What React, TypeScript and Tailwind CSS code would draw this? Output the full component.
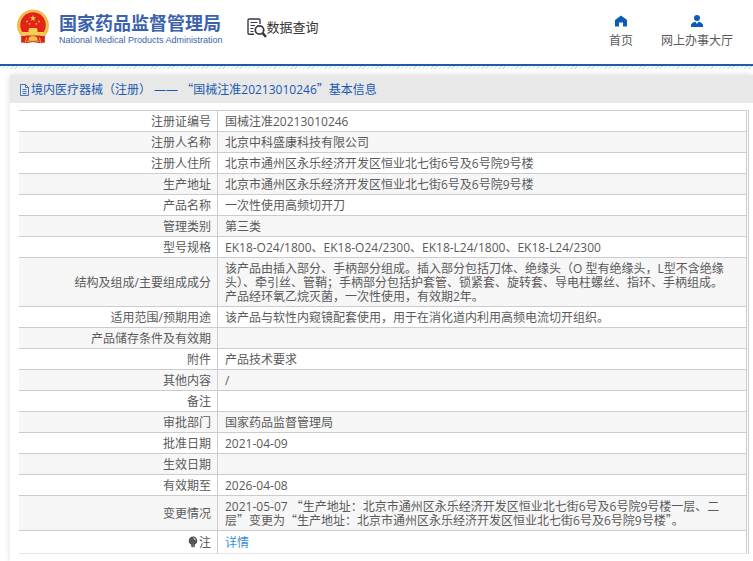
import React from 'react';

interface Row { label: string; value: string; }

const ROWS: Row[] = [
  { label: '注册证编号', value: '国械注准20213010246' },
  { label: '注册人名称', value: '北京中科盛康科技有限公司' },
  { label: '注册人住所', value: '北京市通州区永乐经济开发区恒业北七街6号及6号院9号楼' },
  { label: '生产地址', value: '北京市通州区永乐经济开发区恒业北七街6号及6号院9号楼' },
  { label: '产品名称', value: '一次性使用高频切开刀' },
  { label: '管理类别', value: '第三类' },
  { label: '型号规格', value: 'EK18-O24/1800、EK18-O24/2300、EK18-L24/1800、EK18-L24/2300' },
  {
    label: '结构及组成/主要组成成分',
    value: '该产品由插入部分、手柄部分组成。插入部分包括刀体、绝缘头（O 型有绝缘头，L型不含绝缘头）、牵引丝、管鞘；手柄部分包括护套管、锁紧套、旋转套、导电柱螺丝、指环、手柄组成。产品经环氧乙烷灭菌，一次性使用，有效期2年。',
  },
  { label: '适用范围/预期用途', value: '该产品与软性内窥镜配套使用，用于在消化道内利用高频电流切开组织。' },
  { label: '产品储存条件及有效期', value: '' },
  { label: '附件', value: '产品技术要求' },
  { label: '其他内容', value: '/' },
  { label: '备注', value: '' },
  { label: '审批部门', value: '国家药品监督管理局' },
  { label: '批准日期', value: '2021-04-09' },
  { label: '生效日期', value: '' },
  { label: '有效期至', value: '2026-04-08' },
  {
    label: '变更情况',
    value: '2021-05-07 “生产地址：北京市通州区永乐经济开发区恒业北七街6号及6号院9号楼一层、二层”变更为“生产地址：北京市通州区永乐经济开发区恒业北七街6号及6号院9号楼”。',
  },
];

// The Latin font would set curly quotes narrow, so they take the CJK face.
function Text({ children }: { children: string }) {
  return (
    <>
      {children.split(/([“”])/).map((part, i) =>
        /^[“”]$/.test(part)
          ? <span key={i} className="font-['Noto_Sans_CJK_SC',sans-serif] leading-none">{part}</span>
          : part
      )}
    </>
  );
}

function Emblem() {
  return (
    <svg viewBox="0 0 34 36" className="h-9 w-[34px] shrink-0" aria-hidden="true">
      <path d="M6 25 L5 33.500 L11 34 L17 33 L23 34 L29 33.500 L28 25Z" fill="#d9231b" />
      <circle cx="17" cy="16.500" r="15.800" fill="#f5c452" />
      <circle cx="17" cy="16.500" r="15.300" fill="none" stroke="#e9a93c" strokeWidth="1" strokeDasharray="2 1" />
      <circle cx="17" cy="16" r="12.800" fill="#e2231a" />
      <path d="M17 6l.8 2.200 2.300.1-1.800 1.400.6 2.300-1.900-1.300-1.900 1.300.6-2.300-1.800-1.400 2.300-.1z" fill="#f9d34f" />
      <g fill="#f6b63b">
        <circle cx="11" cy="12.500" r=".9" />
        <circle cx="23" cy="12.500" r=".9" />
        <circle cx="13.700" cy="14.800" r=".9" />
        <circle cx="20.300" cy="14.800" r=".9" />
        <path d="M12.500 20.500l1-1.500h7l1 1.500v2.500h6v3.500H6.500V23h6z" fill="#f8ce55" />
      </g>
      <path d="M5 27h7l2 1.500h6l2-1.500h7l-1 6-6 .5-5-1.500-5 1.500-6-.5z" fill="#d9231b" />
      <path d="M12.500 29.500a4.600 3.200 0 0 1 9 0v2h-9z" fill="#f5c452" />
      <path d="M10.500 28.500l-1 5M23.500 28.500l1 5M11 32.500l6-1.200 6 1.200" fill="none" stroke="#f3bd45" strokeWidth="1" />
    </svg>
  );
}

function SearchDocIcon() {
  return (
    <svg viewBox="0 0 20 20" className="size-5 shrink-0" fill="none" stroke="#393946" aria-hidden="true">
      <path d="M7 16.300H2.200A1.200 1.200 0 0 1 1 15.100V2.200A1.200 1.200 0 0 1 2.200 1h9.600A1.200 1.200 0 0 1 13 2.200V6" strokeWidth="1.400" />
      <path d="M3.500 4.500h7M3.500 7.500h4.500M3.500 10.500h3M3.500 13.500h3" strokeWidth="1.200" />
      <circle cx="12.500" cy="12" r="4.200" strokeWidth="1.800" />
      <path d="M15.600 15.200l3.400 3.600" strokeWidth="2.600" />
    </svg>
  );
}

function PageIcon() {
  return (
    <svg viewBox="0 0 11 12" className="h-3 w-[11px] shrink-0" fill="none" stroke="#1a59b0" strokeWidth=".8" aria-hidden="true">
      <path d="M1.500.5h5l3 3v8h-8zM6.500.5v3h3M3.500 5.500h4M3.500 7.500h4M3.500 9.500h4" />
    </svg>
  );
}

function Bulb() {
  return (
    <svg viewBox="0 0 10 12" className="mr-px inline-block h-3 w-2.5 align-[-1px]" aria-hidden="true">
      <circle cx="5" cy="4.800" r="4.300" fill="#555" />
      <path d="M3 8h4v2.500L5 11.500 3 10.500z" fill="#666" />
      <path d="M5.500 2.200q1.700.3 1.900 2" stroke="#fff" strokeWidth=".9" fill="none" />
    </svg>
  );
}

const LABEL = 'border-t border-r border-[#ccc] pt-1 pb-0.5 pr-1.5 text-right font-normal';
const VALUE = 'border-t border-r border-[#ccc] pt-1 pb-0.5 pl-[7px] pr-4 text-left';

export default function App() {
  return (
    <div lang="zh-CN" className="bg-white font-['Open_Sans','Noto_Sans_CJK_SC',sans-serif] text-xs leading-[14px] text-[#5a5a5a]">
      <header className="flex h-[66px] items-start justify-between border-b-2 border-[#1b5da6] pl-4 pr-5">
        <div className="flex items-start">
          <a href="#" className="flex items-start gap-[9px] pt-[9px] text-[#3b62ad]">
            <Emblem />
            <div className="pt-1 whitespace-nowrap">
              <div className="text-lg font-bold leading-[20px]">国家药品监督管理局</div>
              <div className="font-['Liberation_Sans',sans-serif] text-[9px] leading-[14px]">National Medical Products Administration</div>
            </div>
          </a>
          <h1 className="ml-6 flex items-center pt-[18px] text-[13px] leading-[18px] text-[#333]">
            <SearchDocIcon />
            <span className="pb-0.5">数据查询</span>
          </h1>
        </div>
        <nav className="flex gap-7 pt-[15px]">
          <a href="#" className="flex flex-col items-center gap-[5px]">
            <svg viewBox="0 0 12 12" className="size-3" fill="#0b5bbb" aria-hidden="true">
              <path d="M6 .5L0 5v6.500h4V7.500h4v4h4V5z" />
            </svg>
            <span className="leading-[18px]">首页</span>
          </a>
          <a href="#" className="flex flex-col items-center gap-[5px]">
            <svg viewBox="0 0 12 12" className="size-3" fill="#0b5bbb" aria-hidden="true">
              <circle cx="6" cy="3" r="3" />
              <path d="M0 12V9.500Q1.500 7 4.500 6.800L6 9l1.500-2.200Q10.500 7 12 9.500V12z" />
            </svg>
            <span className="leading-[18px]">网上办事大厅</span>
          </a>
        </nav>
      </header>
      <div className="h-[3px] bg-[repeating-linear-gradient(135deg,#c9e5f4_0px,#c9e5f4_1px,#fff_1px,#fff_3px)]" />

      <main className="ml-2.5 mt-1.5 shadow-[0_0_6px_rgba(0,0,0,0.15)]">
        <h2 className="flex h-7 items-center bg-[#e8e8e8] pl-[9px] pt-0.5 text-[#1a59b0]">
          <PageIcon />
          <span className="ml-px"><Text>境内医疗器械（注册） —— “国械注准20213010246”基本信息</Text></span>
        </h2>
        <div className="bg-white pb-2 pl-[9px] pr-1 pt-[7px]">
          <div className="border-r border-[#ccc] pr-px">
            <table className="w-full table-fixed border-separate border-spacing-0">
              <colgroup>
                <col className="w-[199px]" />
                <col />
              </colgroup>
              <tbody>
                {ROWS.map((row) => (
                  <tr key={row.label} className="h-[21px] even:bg-[#f7f7f7]">
                    <th scope="row" className={LABEL}>{row.label}</th>
                    <td className={VALUE}><Text>{row.value}</Text></td>
                  </tr>
                ))}
                <tr className="h-6">
                  <th scope="row" className={`${LABEL} border-b border-b-[#e5e5e5]`}><Bulb />注</th>
                  <td className={`${VALUE} border-b border-b-[#e5e5e5]`}>
                    <a href="#" className="text-[#3c8fdc]">详情</a>
                  </td>
                </tr>
              </tbody>
            </table>
          </div>
        </div>
      </main>
    </div>
  );
}
